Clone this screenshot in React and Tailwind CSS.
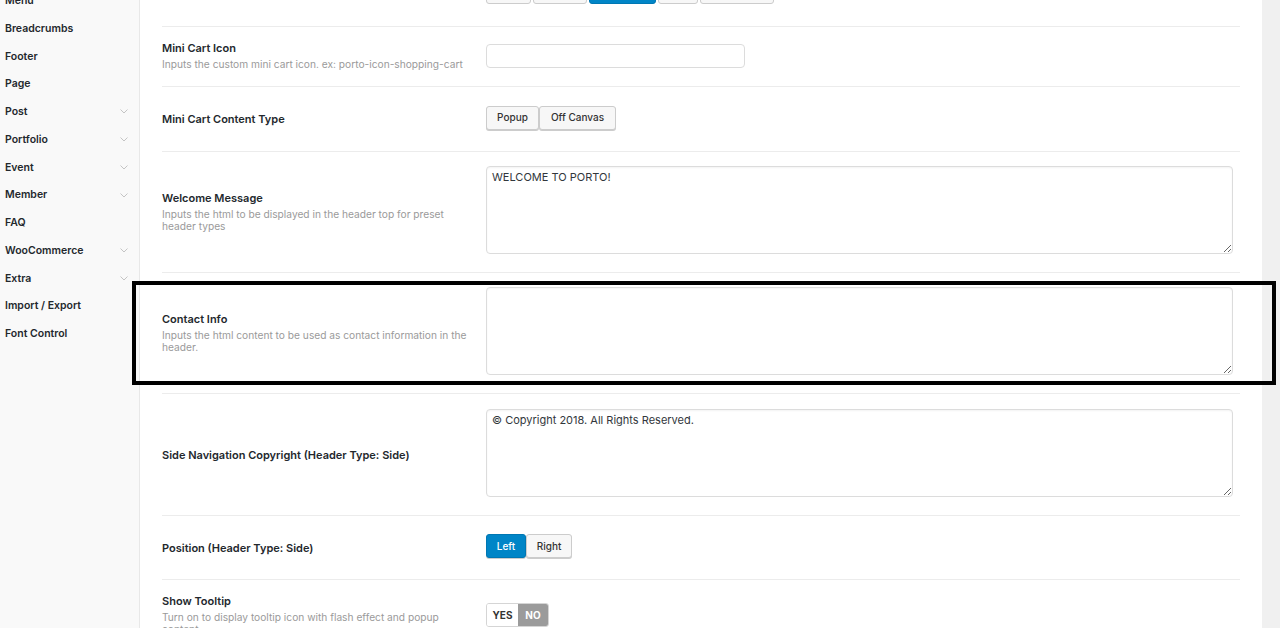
import React from 'react';

const navItems = [
  { label: 'Menu' },
  { label: 'Breadcrumbs' },
  { label: 'Footer' },
  { label: 'Page' },
  { label: 'Post', sub: true },
  { label: 'Portfolio', sub: true },
  { label: 'Event', sub: true },
  { label: 'Member', sub: true },
  { label: 'FAQ' },
  { label: 'WooCommerce', sub: true },
  { label: 'Extra', sub: true },
  { label: 'Import / Export' },
  { label: 'Font Control' },
];

const Chevron = () => (
  <svg width="8" height="5" viewBox="0 0 8 5" className="text-[#c4c4c4]">
    <path d="M0.5 0.5 L4 4 L7.5 0.5" fill="none" stroke="currentColor" strokeWidth="1" />
  </svg>
);

const Label = ({ title, desc }) => (
  <div className={`w-[324px] shrink-0 pr-4 ${desc ? 'mb-[2px]' : ''}`}>
    <div className="text-[11px] font-semibold text-[#23282d] leading-[14px]">{title}</div>
    {desc && <div className="mt-[3px] text-[10.2px] text-[#9a9a9a] leading-[12px]">{desc}</div>}
  </div>
);

const Row = ({ h, children, className = '' }) => (
  <div className={`flex items-center border-b border-[#ececec] mr-[22px] ${h} ${className}`}>{children}</div>
);

const BtnGroup = ({ items, active }) => (
  <div className="flex mb-[3px]">
    {items.map((it, i) => (
      <button
        key={it.label}
        className={`h-[24px] ${it.w} text-[10px] font-medium border rounded-[3px] shadow-[0_1px_0_#ccc] ${
          i === active ? 'bg-[#0085c7] border-[#0077b3] text-white' : 'bg-[#f7f7f7] border-[#cccccc] text-[#333]'
        }`}
      >
        {it.label}
      </button>
    ))}
  </div>
);

const Area = ({ value = '' }) => (
  <textarea
    readOnly
    defaultValue={value}
    className="block mb-[4px] w-[747px] h-[88px] border border-[#dcdcdc] rounded-[4px] px-[5px] py-[2px] text-[11px] text-[#32373c] bg-white shadow-[inset_0_1px_2px_rgba(0,0,0,0.05)] outline-none"
  />
);

export default function App() {
  return (
    <div className="relative flex h-[628px] w-[1280px] overflow-hidden bg-white font-['Inter',sans-serif]">
      {/* left options menu */}
      <aside className="w-[140px] shrink-0 bg-[#f9f9f9] border-r border-[#e8e8e8]">
        <ul className="mt-[-13px]">
          {navItems.map(n => (
            <li key={n.label} className="flex h-[27.75px] items-center justify-between pl-[5px] pr-[11px] text-[10.5px] font-semibold text-[#23282d]">
              <span>{n.label}</span>
              {n.sub && <Chevron />}
            </li>
          ))}
        </ul>
      </aside>

      {/* settings panel */}
      <main className="flex-1 pl-[22px]">
        <div className="mt-[-39px]">
          <Row h="h-[66px]">
            <div className="w-[324px] shrink-0" />
            <div className="flex gap-[2px] mb-[3px]">
              <button className="h-[24px] w-[45px] bg-[#f7f7f7] border border-[#ccc] rounded-[3px]" />
              <button className="h-[24px] w-[54px] bg-[#f7f7f7] border border-[#ccc] rounded-[3px]" />
              <button className="h-[24px] w-[67px] bg-[#0085c7] border border-[#0077b3] rounded-[3px]" />
              <button className="h-[24px] w-[40px] bg-[#f7f7f7] border border-[#ccc] rounded-[3px]" />
              <button className="h-[24px] w-[74px] bg-[#f7f7f7] border border-[#ccc] rounded-[3px]" />
            </div>
          </Row>

          <Row h="h-[60px]">
            <Label title="Mini Cart Icon" desc="Inputs the custom mini cart icon. ex: porto-icon-shopping-cart" />
            <input className="h-[24px] w-[259px] mb-[1px] border border-[#dcdcdc] rounded-[4px] bg-white outline-none" />
          </Row>

          <Row h="h-[65px]">
            <Label title="Mini Cart Content Type" />
            <BtnGroup
              active={-1}
              items={[
                { label: 'Popup', w: 'w-[53px]' },
                { label: 'Off Canvas', w: 'w-[77px]' },
              ]}
            />
          </Row>

          <Row h="h-[121px]">
            <Label title="Welcome Message" desc="Inputs the html to be displayed in the header top for preset header types" />
            <Area value="WELCOME TO PORTO!" />
          </Row>

          <Row h="h-[121px]">
            <Label title="Contact Info" desc="Inputs the html content to be used as contact information in the header." />
            <Area />
          </Row>

          <Row h="h-[122px]">
            <Label title="Side Navigation Copyright (Header Type: Side)" />
            <Area value="© Copyright 2018. All Rights Reserved." />
          </Row>

          <Row h="h-[64px]">
            <Label title="Position (Header Type: Side)" />
            <BtnGroup
              active={0}
              items={[
                { label: 'Left', w: 'w-[40px]' },
                { label: 'Right', w: 'w-[46px]' },
              ]}
            />
          </Row>

          <div className="flex items-start pt-[14px] mr-[22px]">
            <Label title="Show Tooltip" desc="Turn on to display tooltip icon with flash effect and popup content" />
            <div className="mt-[9px] flex h-[24px] border border-[#d5d5d5] rounded-[3px] overflow-hidden text-[10px] font-bold">
              <span className="flex w-[31px] items-center justify-center bg-white text-[#333]">YES</span>
              <span className="flex w-[30px] items-center justify-center bg-[#9b9b9b] text-white">NO</span>
            </div>
          </div>
        </div>
      </main>

      {/* scrollbar gutter */}
      <div className="w-[18px] shrink-0 bg-[#f0f0f0]" />

      {/* highlight frame */}
      <div className="absolute left-[132px] top-[281px] h-[104px] w-[1144px] border-[4px] border-black" />
    </div>
  );
}
